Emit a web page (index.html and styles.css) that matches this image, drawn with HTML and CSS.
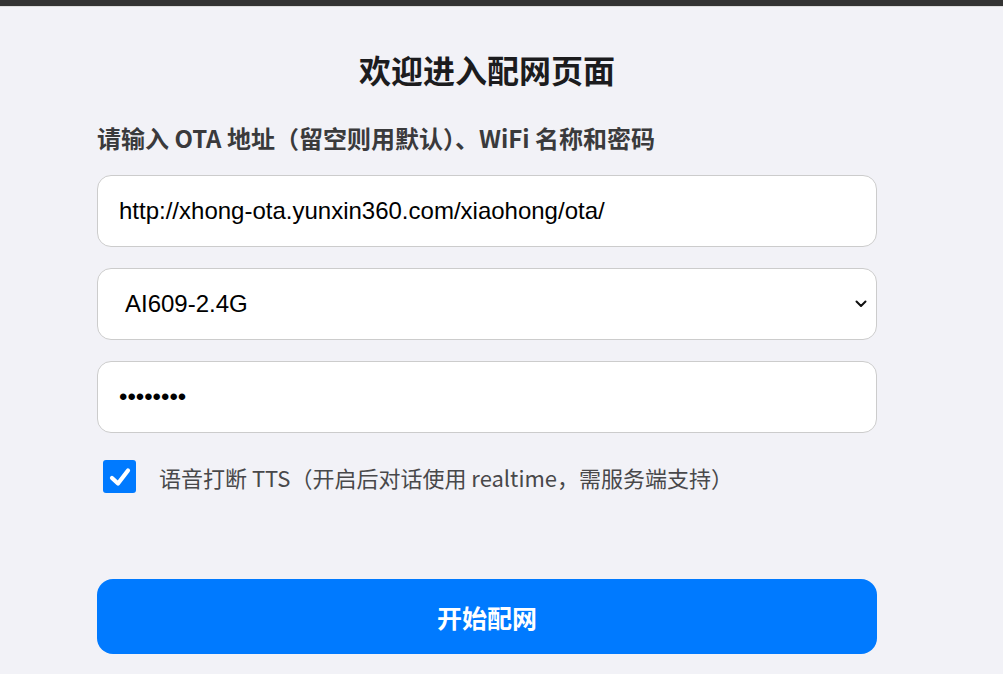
FILE: index.html
```html
<!DOCTYPE html>
<html lang="zh-CN">
<head>
    <meta charset="UTF-8">
    <meta name="viewport" content="width=device-width, initial-scale=1.0">
    <title>配网</title>
    <link rel="stylesheet" href="styles.css">
</head>
<body>
    <div class="topbar"></div>
    <div class="page">
        <div class="container">
            <h1>欢迎进入配网页面</h1>
            <p class="hint">请输入 OTA 地址（留空则用默认）、WiFi 名称和密码</p>

            <input class="field" type="text" value="http://xhong-ota.yunxin360.com/xiaohong/ota/">

            <div class="field select">
                <span>AI609-2.4G</span>
                <svg width="12" height="8" viewBox="0 0 12 8">
                    <path d="M1.5 1.5 L6 6 L10.5 1.5" fill="none" stroke="#111" stroke-width="2" stroke-linecap="round" stroke-linejoin="round"/>
                </svg>
            </div>

            <input class="field" type="password" value="12345678">

            <label class="option">
                <span class="checkbox">
                    <svg width="22" height="20" viewBox="0 0 22 20">
                        <path d="M3 11 L9 16.5 L19 3.5" fill="none" stroke="#fff" stroke-width="4.2" stroke-linecap="round" stroke-linejoin="round"/>
                    </svg>
                </span>
                <span>语音打断 TTS（开启后对话使用 realtime，需服务端支持）</span>
            </label>

            <button class="submit">开始配网</button>
        </div>
    </div>
</body>
</html>
```

FILE: styles.css
```css
* {
    box-sizing: border-box;
}

body {
    margin: 0;
    padding: 0;
    background: #f2f2f7;
    font-family: "Noto Sans CJK SC", "Noto Sans", sans-serif;
}

.topbar {
    height: 7px;
    background: #333;
    border-bottom: 1px solid #ddd;
}

.page {
    padding-right: 29px;
}

.container {
    max-width: 780px;
    margin: 0 auto;
    padding-top: 42px;
}

h1 {
    margin: 0;
    font-size: 32px;
    line-height: 40px;
    font-weight: 700;
    text-align: center;
    color: #1c1c1e;
}

.hint {
    margin: 34px 0 22px;
    font-size: 24px;
    line-height: 30px;
    font-weight: 700;
    color: #3a3a3c;
}

.field {
    display: block;
    width: 100%;
    height: 72px;
    margin: 0 0 21px;
    padding: 0 21px;
    background: #fff;
    border: 1px solid #ccc;
    border-radius: 14px;
    font-family: "Liberation Sans", Arial, sans-serif;
    font-size: 24px;
    color: #000;
    outline: none;
}

.select {
    display: flex;
    align-items: center;
    justify-content: space-between;
    padding: 0 9px 0 27px;
}

.option {
    display: flex;
    align-items: center;
    gap: 23px;
    margin: 27px 0 86px 6px;
    font-size: 22px;
    color: #48484a;
}

.checkbox {
    display: flex;
    align-items: center;
    justify-content: center;
    width: 33px;
    height: 33px;
    border-radius: 3px;
    background: #007aff;
}

.submit {
    display: block;
    width: 100%;
    height: 75px;
    border: none;
    border-radius: 16px;
    background: #007aff;
    color: #fff;
    font-family: "Noto Sans CJK SC", sans-serif;
    font-size: 25px;
    font-weight: 700;
    cursor: pointer;
}
```
